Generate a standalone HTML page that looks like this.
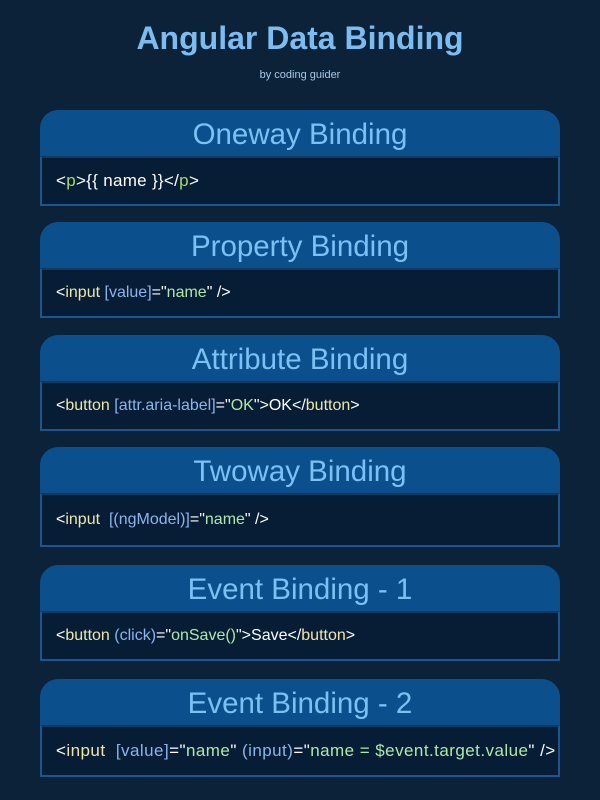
<!DOCTYPE html>
<html><head><style>
body{margin:0;width:600px;height:800px;background:#0b2239;font-family:"Liberation Sans",sans-serif;overflow:hidden;position:relative}
h1{position:absolute;top:20px;left:0;width:600px;text-align:center;margin:0;font-size:32px;color:#7cbcf0;font-weight:bold}
.sub{position:absolute;top:69px;width:600px;text-align:center;font-size:11px;color:#a8c8e8}
.card{position:absolute;left:40px;width:520px}
.hd{height:46px;background:#0b4f8c;border-radius:18px 18px 0 0;text-align:center;color:#7cc0f4;font-size:29.5px;line-height:50px}
.bd{background:#061d35;border:2px solid #1b5690;border-top:2px solid #103a62;box-sizing:border-box;height:50px;padding-left:14px;line-height:46px;font-size:16px;color:#fff;white-space:nowrap}
.t{color:#f0e6a8}.a{color:#8cb4ee}.s{color:#b0e8a8}.p{color:#a8d870}
</style></head><body>
<h1>Angular Data Binding</h1>
<div class="sub">by coding guider</div>
<div class="card" style="top:110px"><div class="hd">Oneway Binding</div><div class="bd" style="font-size:17px;letter-spacing:0.3px">&lt;<span class="p">p</span>&gt;{{ name }}&lt;/<span class="p">p</span>&gt;</div></div>
<div class="card" style="top:222px"><div class="hd">Property Binding</div><div class="bd">&lt;<span class="t">input</span> <span class="a">[value]</span>="<span class="s">name</span>" /&gt;</div></div>
<div class="card" style="top:335px"><div class="hd">Attribute Binding</div><div class="bd">&lt;<span class="t">button</span> <span class="a">[attr.aria-label]</span>="<span class="s">OK</span>"&gt;OK&lt;/<span class="t">button</span>&gt;</div></div>
<div class="card" style="top:447px"><div class="hd">Twoway Binding</div><div class="bd" style="height:54px;line-height:50px">&lt;<span class="t">input</span>&nbsp; <span class="a">[(ngModel)]</span>="<span class="s">name</span>" /&gt;</div></div>
<div class="card" style="top:565px"><div class="hd">Event Binding - 1</div><div class="bd">&lt;<span class="t">button</span> <span class="a">(click)</span>="<span class="s">onSave()</span>"&gt;Save&lt;/<span class="t">button</span>&gt;</div></div>
<div class="card" style="top:679px"><div class="hd">Event Binding - 2</div><div class="bd" style="height:52px;line-height:48px;font-size:17px;letter-spacing:0.45px">&lt;<span class="t">input</span>&nbsp; <span class="a">[value]</span>="<span class="s">name</span>" <span class="a">(input)</span>="<span class="s">name = $event.target.value</span>" /&gt;</div></div>
</body></html>
